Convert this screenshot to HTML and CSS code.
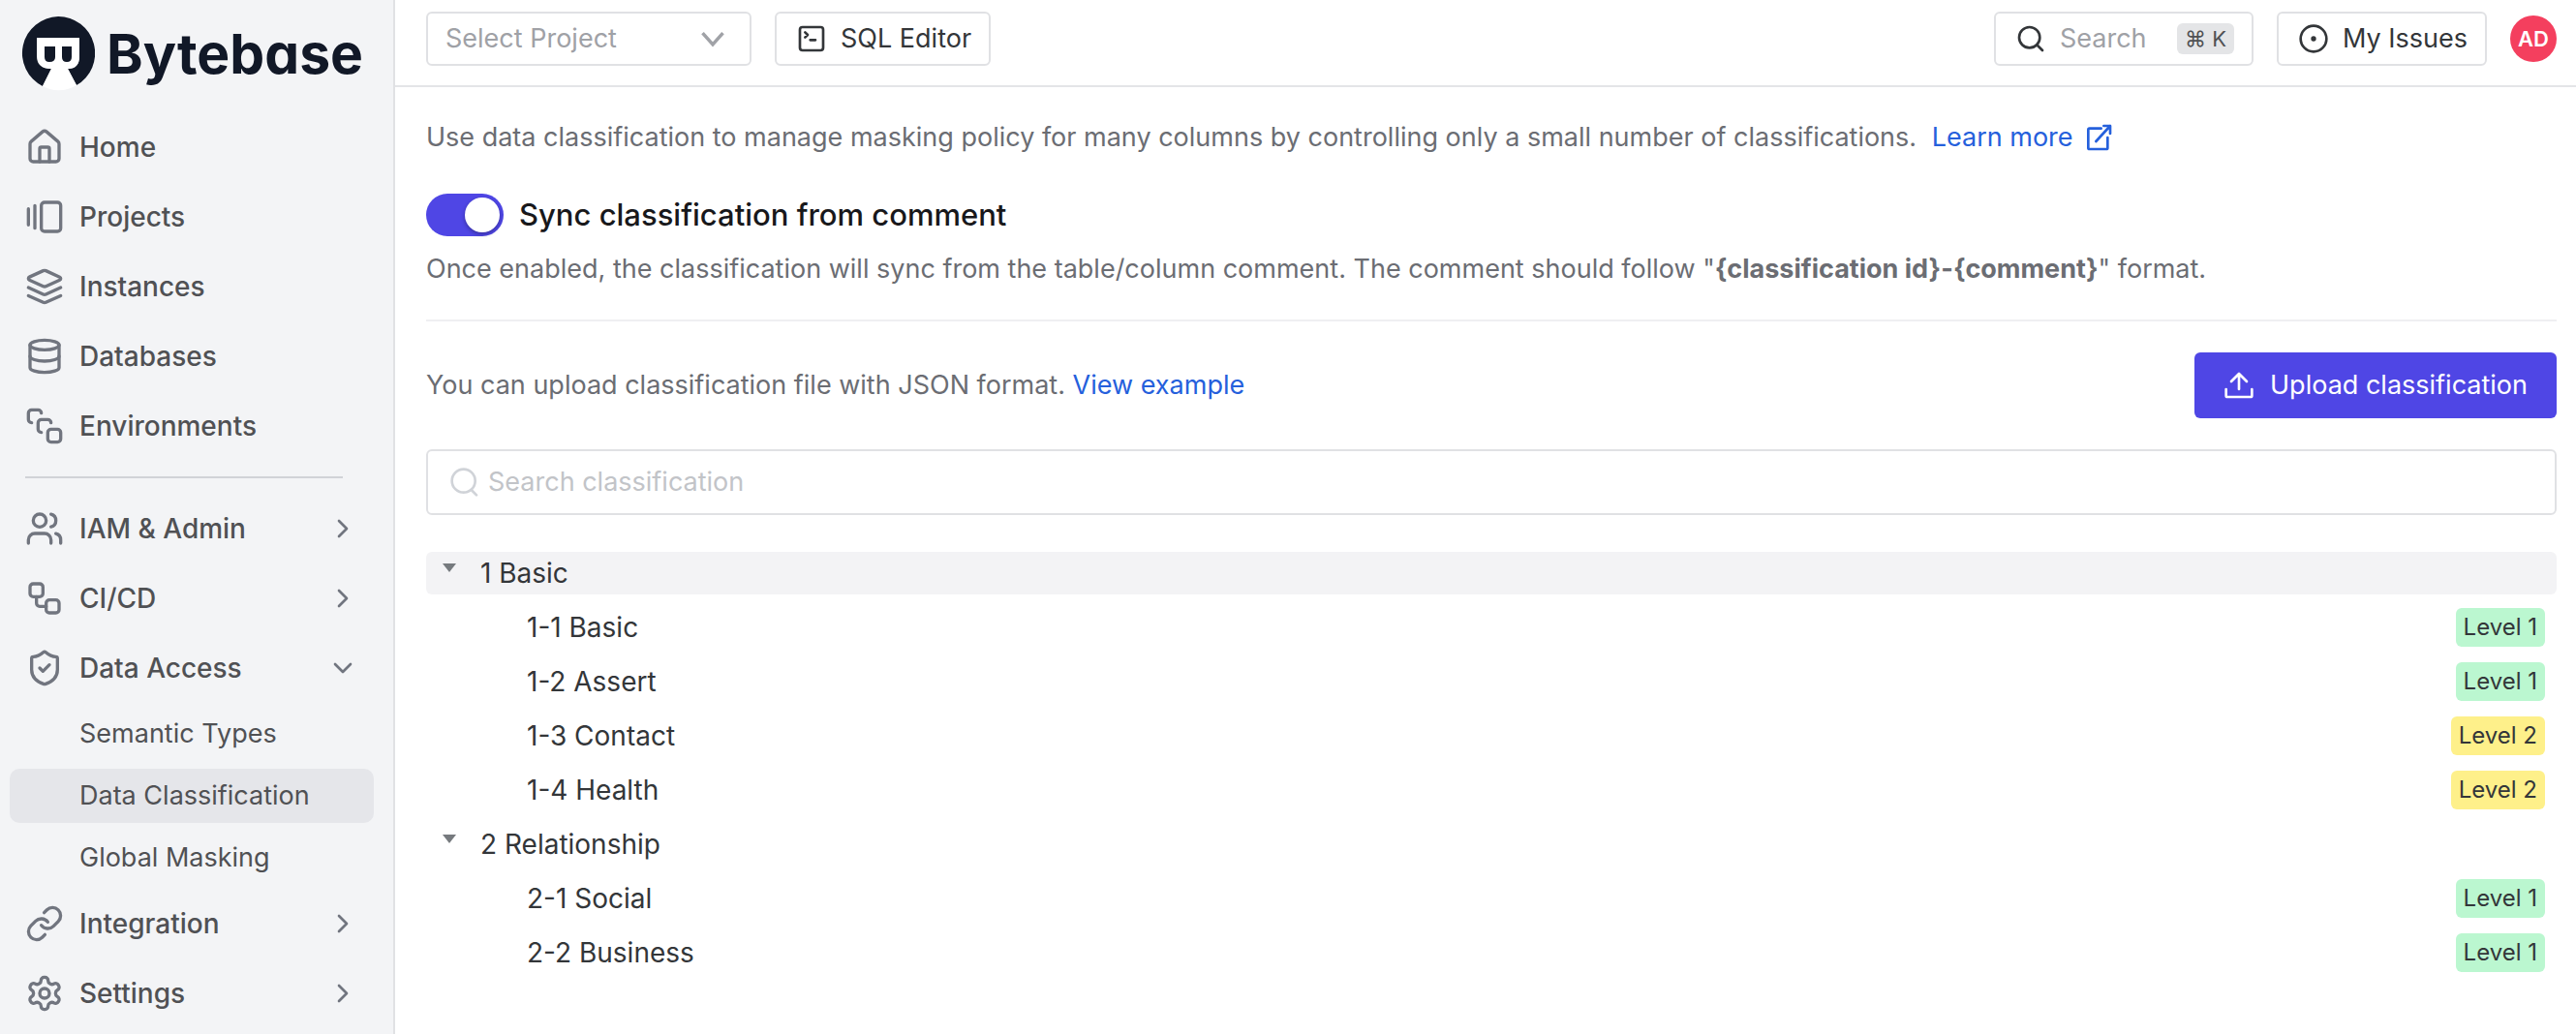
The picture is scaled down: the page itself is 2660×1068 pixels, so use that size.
FILE: index.html
```html
<!DOCTYPE html>
<html lang="en">
<head>
<meta charset="utf-8">
<title>Data Classification - Bytebase</title>
<meta name="viewport" content="width=device-width, initial-scale=1">
<link rel="stylesheet" href="styles.css">
</head>
<body>
<div class="app">
  <aside class="sidebar">
    <a class="brand" href="#">
      <svg class="brand-mark" viewBox="0 0 76 78" aria-hidden="true">
        <path fill="#fff" d="M22 71 L32 50 H44 L57 71 Q39 81 22 71Z"/>
        <path fill="#111827" d="M38 0A38 38 0 0 0 22 72L31 54Q17 54 17 41V22H60V41Q60 54 48 54L57 71A38 38 0 0 0 38 0Z"/>
        <path fill="#fff" d="M16 22H60V41Q60 54 48 54L57 71Q39 81 22 72L31 54Q16 54 16 41Z"/>
        <path fill="#111827" d="M24 31H35V42Q35 47 29 47Q24 47 24 42ZM42 31H52V42Q52 47 47 47Q42 47 42 42Z"/>
      </svg>
      <span class="brand-name">Bytebase</span>
    </a>
    <nav class="nav" aria-label="Main">
      <a class="nav-item" href="#"><svg class="icon" viewBox="0 0 24 24"><path d="M15 21v-8a1 1 0 0 0-1-1h-4a1 1 0 0 0-1 1v8"/><path d="M3 10a2 2 0 0 1 .709-1.528l7-6a2 2 0 0 1 2.582 0l7 6A2 2 0 0 1 21 10v9a2 2 0 0 1-2 2H5a2 2 0 0 1-2-2z"/></svg>Home</a>
      <a class="nav-item" href="#"><svg class="icon" viewBox="0 0 24 24"><path d="M2 7v10M6 5v14"/><rect width="12" height="18" x="10" y="3" rx="2"/></svg>Projects</a>
      <a class="nav-item" href="#"><svg class="icon" viewBox="0 0 24 24"><path d="m12.83 2.18a2 2 0 0 0-1.66 0L2.6 6.08a1 1 0 0 0 0 1.83l8.58 3.91a2 2 0 0 0 1.66 0l8.58-3.9a1 1 0 0 0 0-1.83Z"/><path d="m22 17.65-9.17 4.16a2 2 0 0 1-1.66 0L2 17.65"/><path d="m22 12.65-9.17 4.16a2 2 0 0 1-1.66 0L2 12.65"/></svg>Instances</a>
      <a class="nav-item" href="#"><svg class="icon" viewBox="0 0 24 24"><ellipse cx="12" cy="5" rx="9" ry="3"/><path d="M3 5v14a9 3 0 0 0 18 0V5"/><path d="M3 12a9 3 0 0 0 18 0"/></svg>Databases</a>
      <a class="nav-item" href="#"><svg class="icon" viewBox="0 0 24 24"><rect width="8" height="8" x="14" y="14" rx="2"/><path d="M10 16a2 2 0 0 1-2-2v-4c0-1.100.9-2 2-2h4a2 2 0 0 1 2 2"/><path d="M4 10a2 2 0 0 1-2-2V4c0-1.100.9-2 2-2h4a2 2 0 0 1 2 2"/></svg>Environments</a>
      <hr class="nav-divider">
      <a class="nav-item" href="#"><svg class="icon" viewBox="0 0 24 24"><path d="M16 21v-2a4 4 0 0 0-4-4H6a4 4 0 0 0-4 4v2"/><circle cx="9" cy="7" r="4"/><path d="M22 21v-2a4 4 0 0 0-3-3.870"/><path d="M16 3.130a4 4 0 0 1 0 7.750"/></svg>IAM &amp; Admin<svg class="icon chevron" viewBox="0 0 24 24"><path d="m9 18 6-6-6-6"/></svg></a>
      <a class="nav-item" href="#"><svg class="icon" viewBox="0 0 24 24"><rect width="8" height="8" x="3" y="3" rx="2"/><path d="M7 11v4a2 2 0 0 0 2 2h4"/><rect width="8" height="8" x="13" y="13" rx="2"/></svg>CI/CD<svg class="icon chevron" viewBox="0 0 24 24"><path d="m9 18 6-6-6-6"/></svg></a>
      <a class="nav-item" href="#"><svg class="icon" viewBox="0 0 24 24"><path d="M20 13c0 5-3.500 7.500-7.660 8.950a1 1 0 0 1-.67-.010C7.500 20.500 4 18 4 13V6a1 1 0 0 1 1-1c2 0 4.500-1.200 6.240-2.720a1.170 1.170 0 0 1 1.520 0C14.510 3.810 17 5 19 5a1 1 0 0 1 1 1z"/><path d="m9 12 2 2 4-4"/></svg>Data Access<svg class="icon chevron" viewBox="0 0 24 24"><path d="m6 9 6 6 6-6"/></svg></a>
      <div class="subnav">
        <a class="subnav-item" href="#">Semantic Types</a>
        <a class="subnav-item active" href="#" aria-current="page">Data Classification</a>
        <a class="subnav-item" href="#">Global Masking</a>
      </div>
      <a class="nav-item" href="#"><svg class="icon" viewBox="0 0 24 24"><path d="M10 13a5 5 0 0 0 7.540.540l3-3a5 5 0 0 0-7.070-7.070l-1.720 1.710"/><path d="M14 11a5 5 0 0 0-7.540-.540l-3 3a5 5 0 0 0 7.070 7.070l1.710-1.710"/></svg>Integration<svg class="icon chevron" viewBox="0 0 24 24"><path d="m9 18 6-6-6-6"/></svg></a>
      <a class="nav-item" href="#"><svg class="icon" viewBox="0 0 24 24"><path d="M12.220 2h-.440a2 2 0 0 0-2 2v.180a2 2 0 0 1-1 1.730l-.430.250a2 2 0 0 1-2 0l-.150-.080a2 2 0 0 0-2.730.730l-.220.380a2 2 0 0 0 .730 2.730l.150.100a2 2 0 0 1 1 1.720v.510a2 2 0 0 1-1 1.740l-.150.090a2 2 0 0 0-.730 2.730l.220.380a2 2 0 0 0 2.730.730l.150-.080a2 2 0 0 1 2 0l.430.250a2 2 0 0 1 1 1.730V20a2 2 0 0 0 2 2h.440a2 2 0 0 0 2-2v-.180a2 2 0 0 1 1-1.730l.430-.250a2 2 0 0 1 2 0l.150.080a2 2 0 0 0 2.730-.730l.220-.390a2 2 0 0 0-.730-2.730l-.150-.080a2 2 0 0 1-1-1.740v-.500a2 2 0 0 1 1-1.740l.150-.090a2 2 0 0 0 .730-2.730l-.220-.380a2 2 0 0 0-2.730-.730l-.150.080a2 2 0 0 1-2 0l-.430-.250a2 2 0 0 1-1-1.730V4a2 2 0 0 0-2-2z"/><circle cx="12" cy="12" r="3"/></svg>Settings<svg class="icon chevron" viewBox="0 0 24 24"><path d="m9 18 6-6-6-6"/></svg></a>
    </nav>
  </aside>

  <div class="page">
    <header class="topbar">
      <div class="project-select">
        <select aria-label="Select Project"><option>Select Project</option></select>
        <svg class="select-arrow" viewBox="0 0 24 24" aria-hidden="true"><path d="m3 7 9 10 9-10"/></svg>
      </div>
      <button class="top-button" type="button"><svg class="icon small" viewBox="0 0 24 24"><rect width="18" height="18" x="3" y="3" rx="2"/><path d="m7 7 2 2-2 2M11 13h4"/></svg>SQL Editor</button>
      <button class="top-button search-button" type="button"><svg class="icon small" viewBox="0 0 24 24"><circle cx="11" cy="11" r="8"/><path d="m21 21-4.300-4.300"/></svg><span class="search-label">Search</span><kbd class="shortcut">⌘ K</kbd></button>
      <button class="top-button" type="button"><svg class="icon small" viewBox="0 0 24 24"><circle cx="12" cy="12" r="10"/><circle cx="12" cy="12" r="1"/></svg>My Issues</button>
      <button class="avatar" type="button" aria-label="Account">AD</button>
    </header>

    <main class="content">
      <p class="text">Use data classification to manage masking policy for many columns by controlling only a small number of classifications. <a class="link learn" href="#">Learn more<svg class="icon small" viewBox="0 0 24 24"><path d="M14 5H5a1 1 0 0 0-1 1v14a1 1 0 0 0 1 1h13a1 1 0 0 0 1-1v-8M10 15 21 3M16 3h5v6"/></svg></a></p>

      <section class="sync">
        <div class="sync-row">
          <input class="switch" id="sync" type="checkbox" role="switch" checked>
          <label class="sync-title" for="sync">Sync classification from comment</label>
        </div>
        <p class="text">Once enabled, the classification will sync from the table/column comment. The comment should follow "<b>{classification id}-{comment}</b>" format.</p>
      </section>

      <hr class="divider">

      <div class="upload-row">
        <p class="text">You can upload classification file with JSON format. <a class="link" href="#">View example</a></p>
        <button class="primary" type="button"><svg class="icon small" viewBox="0 0 24 24"><path d="M2 15v5a1 1 0 0 0 1 1h18a1 1 0 0 0 1-1v-5M12 15V3M6 9l6-6 6 6"/></svg>Upload classification</button>
      </div>

      <label class="filter">
        <svg class="icon small" viewBox="0 0 24 24" aria-hidden="true"><circle cx="11" cy="11" r="9"/><path d="m21 22-4-4"/></svg>
        <input type="text" placeholder="Search classification" aria-label="Search classification">
      </label>

      <ul class="tree">
        <li>
          <div class="tree-row selected"><button class="caret" type="button" aria-label="Collapse 1 Basic"></button>1 Basic</div>
          <ul class="tree-children">
            <li class="tree-row">1-1 Basic<span class="level level-1">Level 1</span></li>
            <li class="tree-row">1-2 Assert<span class="level level-1">Level 1</span></li>
            <li class="tree-row">1-3 Contact<span class="level level-2">Level 2</span></li>
            <li class="tree-row">1-4 Health<span class="level level-2">Level 2</span></li>
          </ul>
        </li>
        <li>
          <div class="tree-row"><button class="caret" type="button" aria-label="Collapse 2 Relationship"></button>2 Relationship</div>
          <ul class="tree-children">
            <li class="tree-row">2-1 Social<span class="level level-1">Level 1</span></li>
            <li class="tree-row">2-2 Business<span class="level level-1">Level 1</span></li>
          </ul>
        </li>
      </ul>
    </main>
  </div>
</div>
</body>
</html>
```

FILE: styles.css
```css
*, *::before, *::after { box-sizing: border-box; }

body {
  margin: 0;
  background: #fff;
  color: #333639;
  font: 400 27px/40px Inter, "Liberation Sans", sans-serif;
}

p, ul, hr { margin: 0; padding: 0; }
ul { list-style: none; }
hr { border: 0; height: 2px; }
a { color: inherit; text-decoration: none; }
button, input, select { font: inherit; color: inherit; }
button { cursor: pointer; }

.icon {
  flex: none;
  width: 40px;
  height: 40px;
  fill: none;
  stroke: currentColor;
  stroke-width: 2;
  stroke-linecap: round;
  stroke-linejoin: round;
}
.icon.small { width: 32px; height: 32px; }

.app { display: flex; min-height: 100vh; }

/* Sidebar */
.sidebar {
  flex: none;
  width: 408px;
  background: #f3f4f6;
  border-right: 2px solid #e0e1e4;
}
.brand {
  display: flex;
  align-items: center;
  gap: 12px;
  height: 112px;
  padding-left: 22px;
}
.brand-mark { width: 76px; height: 78px; }
.brand-name {
  color: #111827;
  font-size: 57px;
  font-weight: 700;
  font-feature-settings: "cv11";
}
.nav { padding: 4px 20px 4px 10px; }
.nav-item {
  display: flex;
  align-items: center;
  gap: 16px;
  height: 72px;
  padding: 0 16px;
  color: #505154;
  font-size: 28px;
  font-weight: 500;
}
.nav-item .icon { color: #71757f; }
.nav-item .chevron { width: 32px; height: 32px; margin-left: auto; }
.nav-divider { margin: 16px 32px 16px 16px; background: #d1d3d7; }
.subnav { display: grid; gap: 8px; padding: 4px 0; }
.subnav-item {
  height: 56px;
  padding-left: 72px;
  border-radius: 10px;
  color: #505154;
  line-height: 56px;
}
.subnav-item.active { background: #e5e6ea; }

/* Top bar */
.page { flex: 1; min-width: 0; }
.topbar {
  display: flex;
  align-items: center;
  gap: 24px;
  height: 90px;
  padding: 0 20px 8px 32px;
  border-bottom: 2px solid #e4e5e7;
}
.project-select { position: relative; width: 336px; }
.project-select select {
  display: block;
  width: 100%;
  height: 56px;
  padding: 0 56px 0 18px;
  appearance: none;
  background: #fff;
  border: 2px solid #e0e1e4;
  border-radius: 6px;
  color: #9fa1a6;
}
.select-arrow {
  position: absolute;
  right: 26px;
  top: 14px;
  width: 28px;
  height: 28px;
  fill: none;
  stroke: #a0a2a7;
  stroke-width: 3;
  pointer-events: none;
}
.top-button {
  display: flex;
  align-items: center;
  gap: 14px;
  height: 56px;
  padding: 0 18px 0 20px;
  background: #fff;
  border: 2px solid #e0e1e4;
  border-radius: 6px;
}
.search-button { width: 268px; margin-left: auto; }
.search-label { color: #9fa1a6; }
.shortcut {
  margin-left: auto;
  padding: 0 8px;
  background: #e4e5e7;
  border-radius: 6px;
  color: #505154;
  font: 400 22px/32px Inter, "DejaVu Sans", sans-serif;
}
.avatar + .top-button { margin: 0; }
.avatar {
  width: 48px;
  height: 48px;
  padding: 0;
  background: #f43f5e;
  border: 0;
  border-radius: 50%;
  color: #fff;
  font-size: 22px;
  font-weight: 600;
}

/* Page content */
.content { padding: 32px 20px 48px 32px; }
.text { color: #6b6d73; }
.link { color: #2560dc; }
.learn { display: inline-flex; align-items: center; gap: 10px; margin-left: 8px; vertical-align: bottom; }
.sync { margin-top: 36px; }
.sync-row { display: flex; align-items: center; gap: 16px; height: 48px; margin-bottom: 12px; }
.sync-title { color: #18181b; font-size: 31px; font-weight: 500; }
.switch {
  flex: none;
  width: 80px;
  height: 44px;
  margin: 0;
  padding: 4px;
  appearance: none;
  background: #c4c6cb;
  border-radius: 22px;
}
.switch::before {
  content: "";
  display: block;
  width: 36px;
  height: 36px;
  background: #fff;
  border-radius: 18px;
  box-shadow: 0 2px 4px rgba(0, 0, 0, 0.3);
}
.switch:checked { background: #4f46e5; }
.switch:checked::before { margin-left: auto; }
.divider { margin: 32px 0; background: #efeff2; }
.upload-row { display: flex; align-items: center; justify-content: space-between; }
.primary {
  display: flex;
  align-items: center;
  gap: 16px;
  height: 68px;
  padding: 0 30px;
  background: #4f46e5;
  border: 0;
  border-radius: 6px;
  color: #fff;
}
.filter {
  display: flex;
  align-items: center;
  gap: 8px;
  height: 68px;
  margin: 32px 0 38px;
  padding: 0 22px;
  border: 2px solid #e0e1e4;
  border-radius: 6px;
}
.filter .icon { color: #d0d3d8; }
.filter input { flex: 1; min-width: 0; padding: 0; border: 0; outline: 0; background: none; }
.filter input::placeholder { color: #c2c4c8; }

/* Classification tree */
.tree, .tree-children, .tree li:not(.tree-row) { display: grid; gap: 12px; }
.tree-row {
  display: flex;
  align-items: center;
  height: 44px;
  padding-right: 12px;
  border-radius: 6px;
  font-size: 28px;
}
.tree-row.selected { background: #f3f3f5; }
.tree-children .tree-row { padding-left: 104px; }
.caret {
  align-self: flex-start;
  display: grid;
  place-items: center;
  width: 48px;
  height: 32px;
  margin-right: 8px;
  padding: 0;
  background: none;
  border: 0;
}
.caret::before {
  content: "";
  border: 7px solid transparent;
  border-top: 9px solid #767a7e;
  border-bottom: 0;
}
.level {
  margin-left: auto;
  padding: 0 8px;
  border-radius: 6px;
  font-size: 24px;
  line-height: 40px;
}
.level-1 { background: #bbf7d0; }
.level-2 { background: #fef08a; }
```
